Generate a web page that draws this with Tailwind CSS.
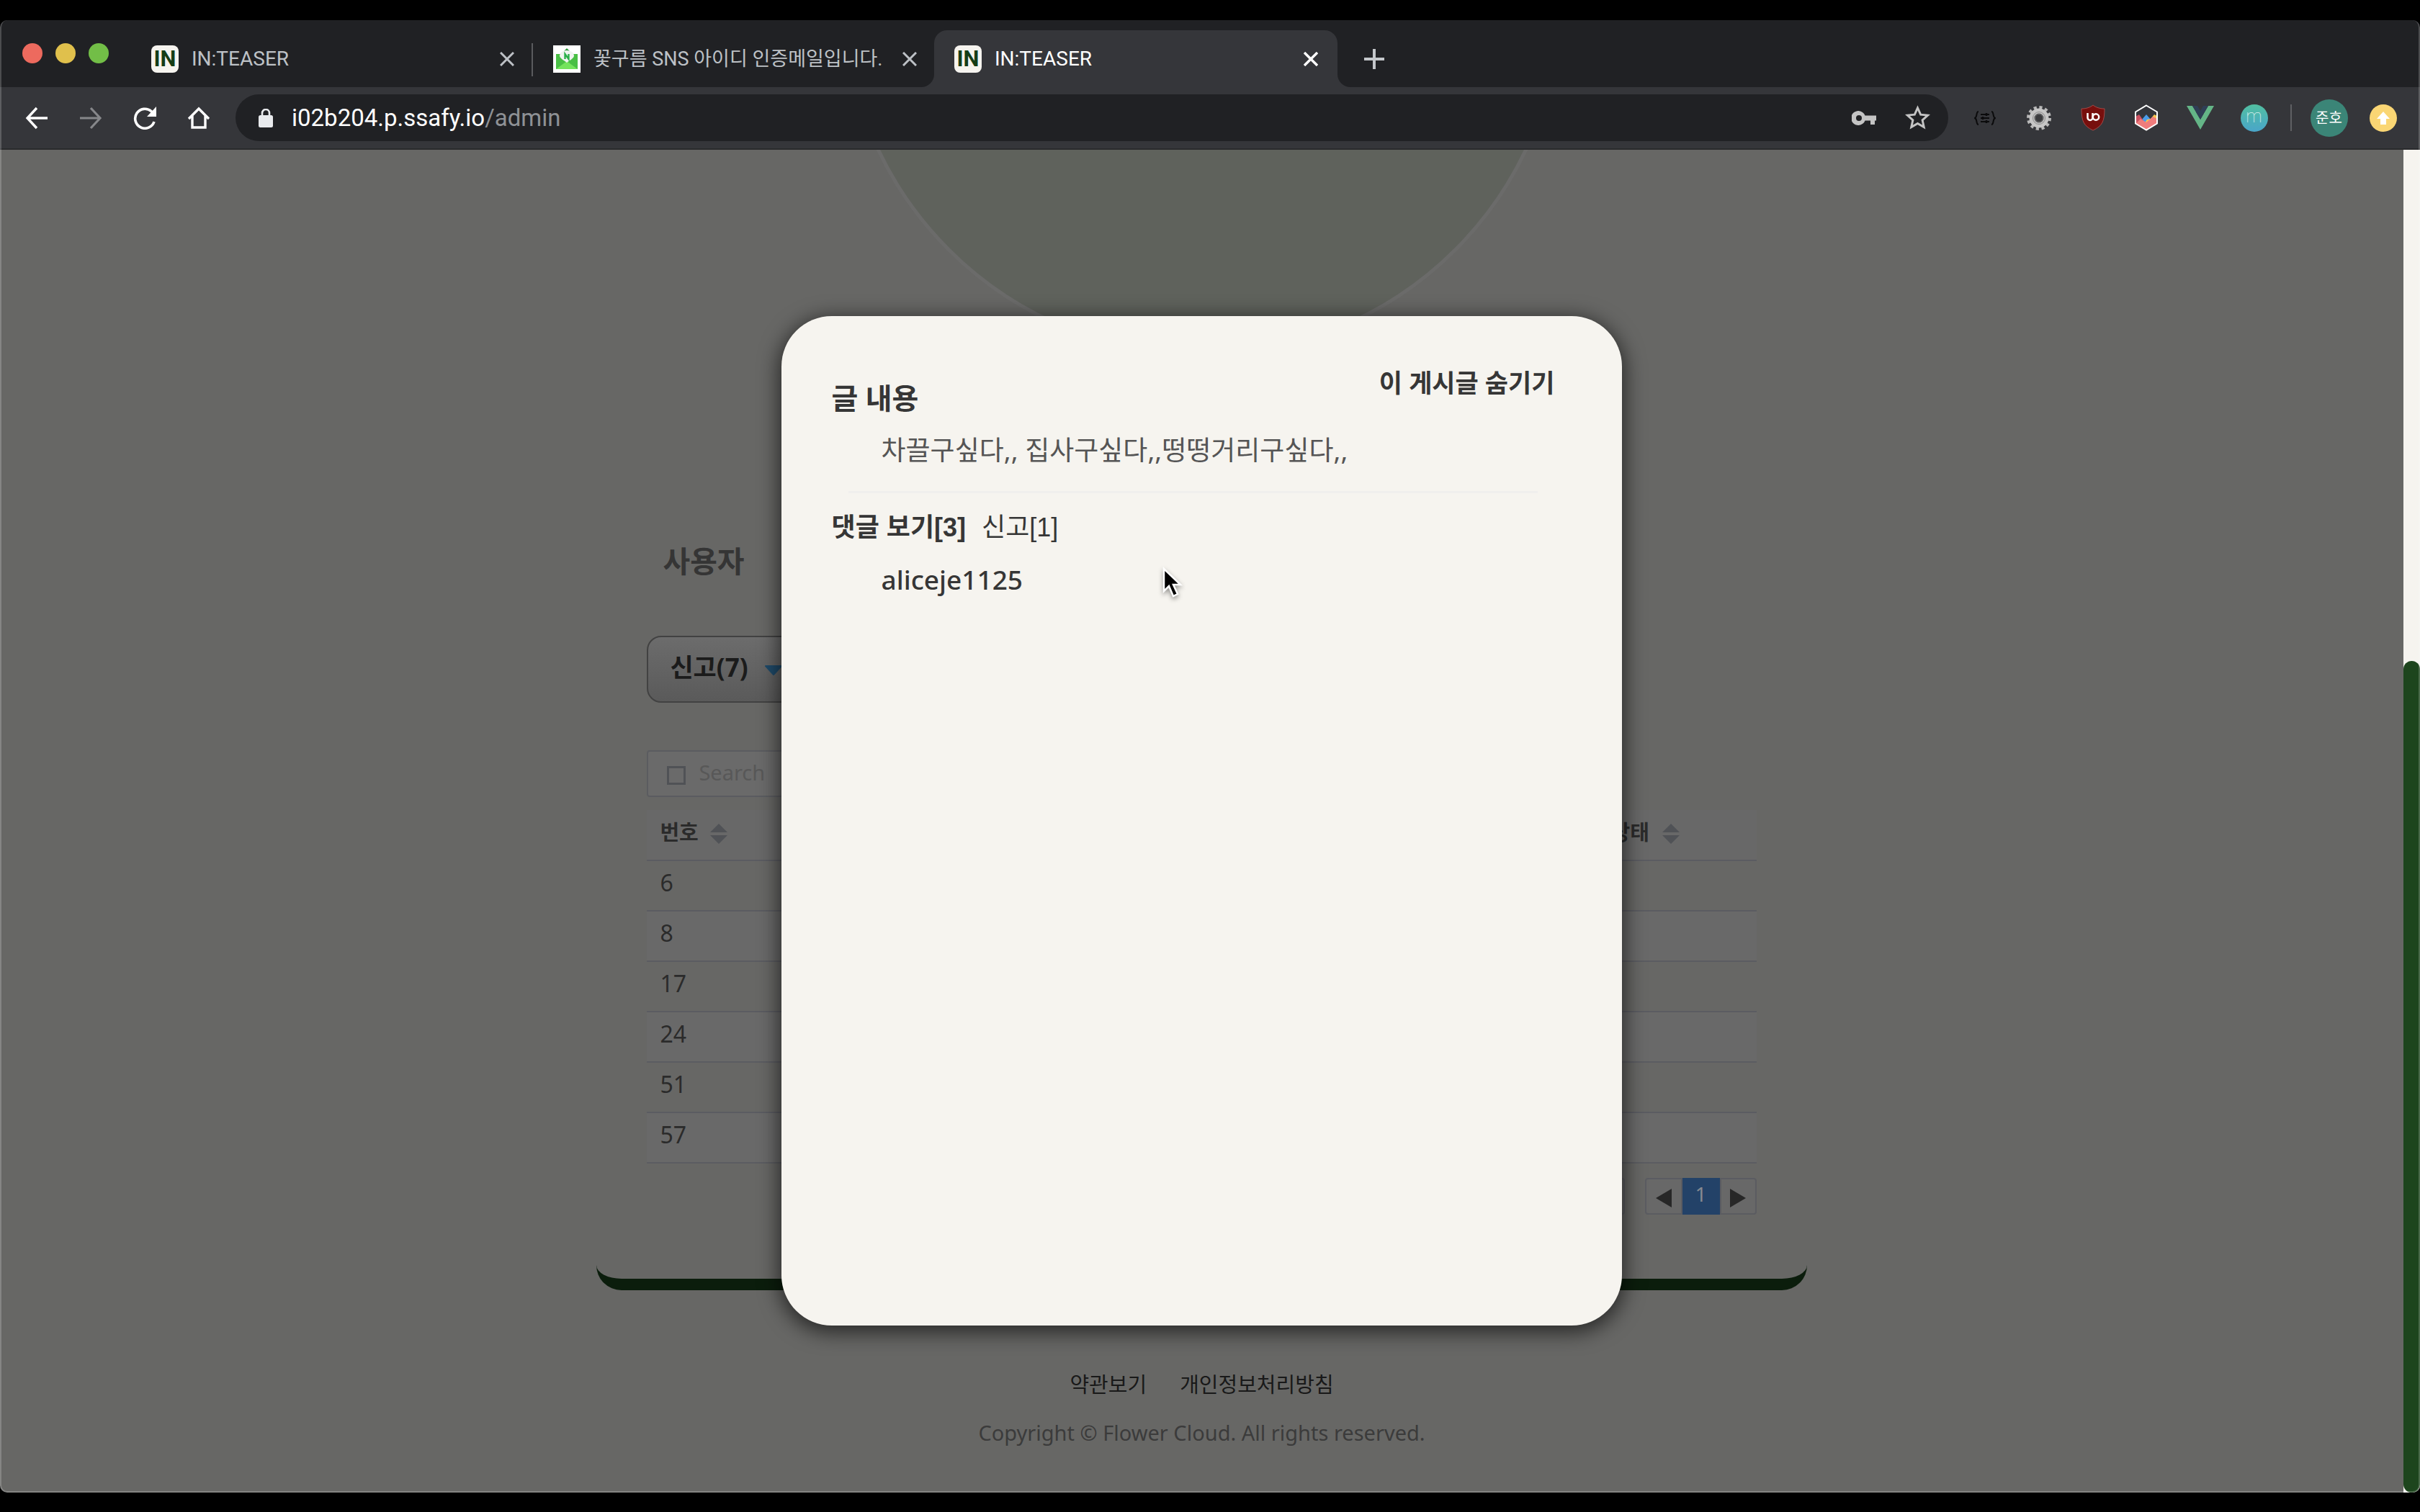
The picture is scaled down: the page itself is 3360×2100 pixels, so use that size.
<!DOCTYPE html>
<html lang="ko">
<head>
<meta charset="utf-8">
<title>IN:TEASER</title>
<script src="https://cdn.jsdelivr.net/npm/@tailwindcss/browser@4"></script>
</head>
<body class="flex min-h-screen flex-col bg-black py-7 font-['Noto_Sans','Noto_Sans_CJK_KR',sans-serif]">
<div class="relative flex flex-1 flex-col overflow-hidden rounded-[10px] bg-[#202124]">

  <!-- Tab strip -->
  <header class="font-['Roboto','Noto_Sans_CJK_KR',sans-serif]">
    <div class="flex h-[93px] items-end bg-[#202124]">
      <div class="flex gap-[18px] self-center pb-[2px] pl-[31px]">
        <button aria-label="Close window" class="size-7 rounded-full bg-[#ed6a5e]"></button>
        <button aria-label="Minimize" class="size-7 rounded-full bg-[#e0c04c]"></button>
        <button aria-label="Zoom" class="size-7 rounded-full bg-[#72be47]"></button>
      </div>
      <nav class="ml-[31px] flex items-end text-[#bdc1c6]" aria-label="Tabs">
        <div class="flex h-[79px] w-[556px] items-center pr-6 pl-7">
          <span class="flex size-[38px] items-center justify-center rounded-lg bg-[#f6f4ef] font-['Roboto',sans-serif] text-[31px] leading-none font-bold text-[#153d16]">IN</span>
          <span class="ml-[18px] flex-1 text-[28px] leading-9">IN:TEASER</span>
          <button aria-label="Close tab"><svg class="size-5" viewBox="0 0 20 20" fill="none" stroke="currentColor" stroke-width="3"><path d="M1 1l18 18M19 1L1 19"/></svg></button>
        </div>
        <div class="mb-[15px] h-[46px] w-[2px] bg-[#5a5b5e]"></div>
        <div class="flex h-[79px] w-[557px] items-center pr-6 pl-7">
          <svg class="size-[38px]" viewBox="0 0 38 38"><path fill="#fff" d="M0 0h38v38H0z"/><path fill="#2f9a3c" d="M19 4l6 6H13z"/><path fill="#49bf45" d="M4 12h30v21H4z"/><path fill="#74e35c" d="M4 33l15-11 15 11z"/><path fill="#f0f3f0" d="M9 14a10 7 0 0120 0c0 4-5 6-10 10-5-4-10-6-10-10z"/><path d="M16.500 19v-7l5 7v-7" fill="none" stroke="#2bb04a" stroke-width="2.400"/></svg>
          <span class="ml-[18px] flex-1 text-[27px] leading-9 whitespace-nowrap">꽃구름 SNS 아이디 인증메일입니다.</span>
          <button aria-label="Close tab"><svg class="size-5" viewBox="0 0 20 20" fill="none" stroke="currentColor" stroke-width="3"><path d="M1 1l18 18M19 1L1 19"/></svg></button>
        </div>
        <div class="relative flex h-[79px] w-[560px] items-center rounded-t-[18px] bg-[#35363a] pr-[27px] pl-7 text-white">
          <svg class="absolute bottom-0 -left-[18px] size-[18px]" viewBox="0 0 18 18"><path fill="#35363a" d="M18 0v18H0A18 18 0 0018 0z"/></svg>
          <svg class="absolute -right-[18px] bottom-0 size-[18px]" viewBox="0 0 18 18"><path fill="#35363a" d="M0 0v18h18A18 18 0 010 0z"/></svg>
          <span class="flex size-[38px] items-center justify-center rounded-lg bg-[#f6f4ef] font-['Roboto',sans-serif] text-[31px] leading-none font-bold text-[#153d16]">IN</span>
          <span class="ml-[18px] flex-1 text-[28px] leading-9">IN:TEASER</span>
          <button aria-label="Close tab"><svg class="size-5" viewBox="0 0 20 20" fill="none" stroke="currentColor" stroke-width="3.400"><path d="M1 1l18 18M19 1L1 19"/></svg></button>
        </div>
      </nav>
      <button aria-label="New tab" class="mb-[25px] ml-[37px] text-[#c4c7cb]"><svg class="size-7" viewBox="0 0 28 28" fill="none" stroke="currentColor" stroke-width="4"><path d="M14 0v28M0 14h28"/></svg></button>
    </div>

    <!-- Toolbar -->
    <div class="flex h-[87px] items-center border-b-2 border-[#2a2b2d] bg-[#35363a] px-[14px] text-white">
      <button aria-label="Back" class="flex w-[74px] justify-center"><svg class="size-8" viewBox="0 0 32 32" fill="none" stroke="currentColor" stroke-width="3.400"><path d="M31 16H3M16 2L3 16l13 14"/></svg></button>
      <button aria-label="Forward" class="flex w-[75px] justify-center text-[#86878a]"><svg class="size-8" viewBox="0 0 32 32" fill="none" stroke="currentColor" stroke-width="3.200"><path d="M1 16h28M16 2l13 14-13 14"/></svg></button>
      <button aria-label="Reload" class="flex w-[75px] justify-center"><svg class="size-8" viewBox="0 0 32 32" fill="none" stroke="currentColor" stroke-width="3.600"><path d="M29 21A13.500 13.500 0 1125 6.500l3 3"/><path d="M32 0v14H19z" fill="currentColor" stroke="none"/></svg></button>
      <button aria-label="Home" class="flex w-[75px] justify-center"><svg class="size-8" viewBox="0 0 32 32" fill="none" stroke="currentColor" stroke-width="3.400"><path d="M2 17L16 3l14 14M7 13v16h18V13"/></svg></button>
      <div class="ml-[14px] flex h-[65px] flex-1 items-center rounded-full bg-[#202124] pr-[25px] pl-8">
        <svg class="h-[26px] w-5 text-[#e8eaed]" viewBox="0 0 20 26"><rect y="9" width="20" height="17" rx="2.500" fill="currentColor"/><path d="M5 10V6a5 5 0 0110 0v4" fill="none" stroke="currentColor" stroke-width="2.600"/></svg>
        <a href="#" class="ml-[26px] flex-1 text-[33px] leading-10">i02b204.p.ssafy.io<span class="text-[#8e9195]">/admin</span></a>
        <button aria-label="Passwords" class="text-[#c4c4c4]"><svg class="h-5 w-[34px]" viewBox="0 0 34 20"><path fill="currentColor" fill-rule="evenodd" d="M18.500 6.500H34v7h-2V19h-6v-5.500h-7.500A10 10 0 1118.500 6.500zM10 6a4 4 0 100 8 4 4 0 000-8z"/></svg></button>
        <button aria-label="Bookmark" class="ml-10 text-[#c4c4c4]"><svg class="size-[35px]" viewBox="0 0 36 36" fill="none" stroke="currentColor" stroke-width="3"><path d="M18 4l4.300 9.500 10.200 1-7.700 6.900 2.200 10.100-9-5.300-9 5.300 2.200-10.100-7.700-6.900 10.200-1z"/></svg></button>
      </div>
      <button aria-label="JSON viewer" class="ml-[13px] flex w-[75px] justify-center text-[#0b0b0c]"><svg class="h-5 w-[30px]" viewBox="0 0 30 20" fill="none" stroke="currentColor" stroke-width="2"><path d="M6 1C2 1 5 8 1 10c4 2 1 9 5 9M24 1c4 0 1 7 5 9-4 2-1 9-5 9M9 5h12M9 10h12M9 15h12"/><path d="M17 3v4M12 8v4M17 13v4" stroke-width="2.500"/></svg></button>
      <button aria-label="Settings extension" class="flex w-[75px] justify-center"><svg class="size-[36px]" viewBox="-18 -18 36 36"><circle r="14.500" fill="none" stroke="#b9b9b9" stroke-width="5" stroke-dasharray="4 3.590"/><circle r="10" fill="none" stroke="#c6c6c6" stroke-width="7"/><circle r="8.500" fill="none" stroke="#8b8b8b"/><circle r="5.500" fill="#3a3b3e" stroke="#777"/></svg></button>
      <button aria-label="uBlock" class="flex w-[75px] justify-center"><svg class="h-[37px] w-[34px]" viewBox="0 0 34 37"><path fill="#770f0d" stroke="#a34a48" d="M17 1c5 4 11 5 16 5 0 17-3 24-16 30C4 30 1 23 1 6c5 0 11-1 16-5z"/><path d="M9.500 12v6.500a3.500 3.500 0 007 0V12" fill="none" stroke="#fff" stroke-width="2.500"/><circle cx="21" cy="17.500" r="4.200" fill="none" stroke="#fff" stroke-width="2.500"/></svg></button>
      <button aria-label="Chart extension" class="flex w-[74px] justify-center"><svg class="h-[37px] w-[34px]" viewBox="0 0 34 37"><path fill="#33353b" d="M17 1l15 9v17l-15 9-15-9V10z"/><path fill="#4a9be8" d="M10 22l7-8 7 8-7 6z"/><path fill="#f5c451" d="M14 27l4-6 5-1 5-6 4 2v11z"/><path fill="#cc5262" d="M2 17l5-3 7 10v8L2 27z"/><path fill="#f07c7c" d="M2 27l7-7 8 5 9-8 6 3v7l-15 9z"/><path fill="none" stroke="#fff" stroke-width="2" d="M17 1.500l15 9v16l-15 9-15-9v-16z"/></svg></button>
      <button aria-label="Vue devtools" class="flex w-[75px] justify-center"><svg class="h-[33px] w-[38px]" viewBox="0 0 38 33"><path fill="#64b587" d="M0 0h8l11 19L30 0h8L19 33z"/><path fill="#2f3e55" d="M8 0h7l4 7 4-7h7L19 19z"/></svg></button>
      <button aria-label="m extension" class="flex w-[75px] justify-center"><span class="flex size-[38px] items-center justify-center rounded-full bg-linear-to-b from-[#52bfa0] to-[#4aa5c9] pb-1 font-['Roboto',sans-serif] text-[25px] leading-none font-thin text-white/80">m</span></button>
      <div class="ml-[13px] h-[37px] w-[2px] bg-[#5f6063]"></div>
      <button class="ml-[14px] flex w-[75px] justify-center"><span class="flex size-[52px] items-center justify-center rounded-full bg-[#3b8577] text-[20px] leading-none">준호</span></button>
      <button aria-label="Update" class="flex w-[75px] justify-center"><svg class="size-[38px]" viewBox="0 0 38 38"><circle cx="19" cy="19" r="19" fill="#fad674"/><path fill="#fff" d="M19 10l9 10h-5v8h-8v-8h-5z"/></svg></button>
    </div>
  </header>

  <!-- Page -->
  <div class="flex flex-1">
    <div class="relative flex-1 overflow-hidden bg-[#676765]">
      <main>
        <div class="mx-auto -mt-[713px] size-[1000px] rounded-full border-[5px] border-[#6b6b6a] bg-[#5f625c]"></div>
        <section class="mx-auto mt-[98px] w-[50.35%] rounded-b-[35px] border-b-[16px] border-[#0b1d0c] px-[70px] pt-[156px] pb-[89px]">
          <h2 class="pl-[22px] text-[41px] leading-[60px] font-bold text-[#353535]">사용자</h2>
          <button class="mt-[74px] flex h-[93px] w-[320px] items-center rounded-[20px] border-2 border-[#424242] bg-linear-to-b from-[#6c6c6c] to-[#5a5a5a] pb-1 pl-[30px] text-[35px] font-bold text-[#1b1b1b]">신고(7)<svg class="mt-2 ml-[22px] h-[15px] w-[26px]" viewBox="0 0 26 15"><path d="M2 1h22L13 13z" fill="#1f4a69" stroke="#1f4a69" stroke-width="2" stroke-linejoin="round"/></svg></button>
          <div class="mt-[66px] flex h-[65px] w-[600px] items-center rounded-[4px] border-2 border-[#5b5c60] bg-[#6a6a6a] pl-[26px]">
            <span class="mt-1 size-[26px] border-[3px] border-[#505256]"></span>
            <input type="text" aria-label="Search" placeholder="Search" class="mb-1 ml-[18px] w-[300px] text-[29px] leading-10 placeholder:text-[#585858]">
          </div>
          <table class="mt-[18px] w-full table-fixed text-left text-[#2b2b2b]">
            <thead>
              <tr class="h-[70px] border-b-2 border-[#5b5c61] bg-[#686868] text-[29px]">
                <th class="pb-2 pl-[18px] font-bold"><span class="flex items-center gap-4">번호<svg class="mt-1 h-7 w-6 text-[#505256]" viewBox="0 0 24 28"><path fill="currentColor" d="M12 0l12 12H0zM0 16h24L12 28z"/></svg></span></th>
                <th class="w-[202px] pb-2 font-bold"><span class="flex items-center gap-[18px]">상태<svg class="mt-1 h-7 w-6 text-[#505256]" viewBox="0 0 24 28"><path fill="currentColor" d="M12 0l12 12H0zM0 16h24L12 28z"/></svg></span></th>
              </tr>
            </thead>
            <tbody class="text-[32px] leading-10">
              <tr class="h-[70px] border-b-2 border-[#5b5c61]"><td class="pb-2 pl-[18px]">6</td><td></td></tr>
              <tr class="h-[70px] border-b-2 border-[#5b5c61] bg-[#696969]"><td class="pb-2 pl-[18px]">8</td><td></td></tr>
              <tr class="h-[70px] border-b-2 border-[#5b5c61]"><td class="pb-2 pl-[18px]">17</td><td></td></tr>
              <tr class="h-[70px] border-b-2 border-[#5b5c61] bg-[#696969]"><td class="pb-2 pl-[18px]">24</td><td></td></tr>
              <tr class="h-[70px] border-b-2 border-[#5b5c61]"><td class="pb-2 pl-[18px]">51</td><td></td></tr>
              <tr class="h-[70px] border-b-2 border-[#5b5c61] bg-[#696969]"><td class="pb-2 pl-[18px]">57</td><td></td></tr>
            </tbody>
          </table>
          <div class="mt-5 flex h-[51px] justify-end">
            <select aria-label="Rows per page" class="mr-7 w-[140px] appearance-none rounded-[4px] border-2 border-[#5b5c61]"><option>10</option></select>
            <button aria-label="Previous" class="flex w-[52px] items-center justify-center rounded-l-[4px] border-2 border-[#5b5c61] bg-[#686868]"><svg class="mt-1 h-[26px] w-[22px]" viewBox="0 0 22 26"><path fill="#272727" d="M22 0v26L0 13z"/></svg></button>
            <button class="w-[52px] bg-[#234268] pb-2 text-[28px] leading-none text-[#868a90]">1</button>
            <button aria-label="Next" class="flex w-[51px] items-center justify-center rounded-r-[4px] border-2 border-[#5b5c61] bg-[#686868]"><svg class="mt-1 h-[26px] w-[22px]" viewBox="0 0 22 26"><path fill="#272727" d="M0 0v26l22-13z"/></svg></button>
          </div>
        </section>
      </main>
      <footer class="mt-[107px] pb-[59px] text-center">
        <div class="flex justify-center gap-[46px] text-[29px] leading-[48px] text-[#191919]"><a href="#">약관보기</a><a href="#">개인정보처리방침</a></div>
        <p class="mt-[19px] text-[29px] leading-[48px] text-[#3b3b3b]">Copyright © Flower Cloud. All rights reserved.</p>
      </footer>

      <!-- Post dialog -->
      <div class="absolute inset-0 flex items-center justify-center pb-[2px]">
        <div role="dialog" aria-label="글 내용" class="relative min-h-[1402px] w-[35%] rounded-[70px] bg-[#f6f4ef] px-[70px] pt-[68px] text-[#363636] shadow-[0_6px_28px_4px_rgba(0,0,0,0.6)]">
          <div class="flex items-start justify-between pr-6">
            <h3 class="mt-4 text-[40px] leading-[60px] font-bold">글 내용</h3>
            <button class="text-[35px] leading-[50px] font-bold">이 게시글 숨기기</button>
          </div>
          <p class="mt-[17px] pl-[69px] text-[37px] leading-[50px] text-[#555]">차끌구싶다,, 집사구싶다,,떵떵거리구싶다,,</p>
          <hr class="mt-[32px] mr-[47px] ml-[23px] border-0 border-t-[3px] border-[#f0efed]">
          <div class="mt-[23px] flex gap-[22px] font-['Liberation_Sans','Noto_Sans_CJK_KR',sans-serif] text-[36px] leading-[50px]"><button class="font-bold">댓글 보기[3]</button><button>신고[1]</button></div>
          <p class="mt-[22px] pl-[69px] text-[37px] leading-[50px] font-medium">aliceje1125</p>
          <svg class="absolute top-[348px] left-[528px] h-[46px] w-8 drop-shadow-[0_3px_3px_rgba(0,0,0,0.4)]" viewBox="0 0 32 46"><path d="M3 3v31l7-7 6 14 6-3-6-13h10z" fill="#000" stroke="#fff" stroke-width="2.500"/></svg>
        </div>
      </div>
    </div>
    <div class="flex w-[23px] flex-col bg-[#f6f4ef] pt-[710px]"><div class="flex-1 rounded-full bg-[#1d451d]"></div></div>
  </div>
  <div class="pointer-events-none absolute inset-0 rounded-[10px] border-x-2 border-b-2 border-white/20"></div>
</div>
</body>
</html>
